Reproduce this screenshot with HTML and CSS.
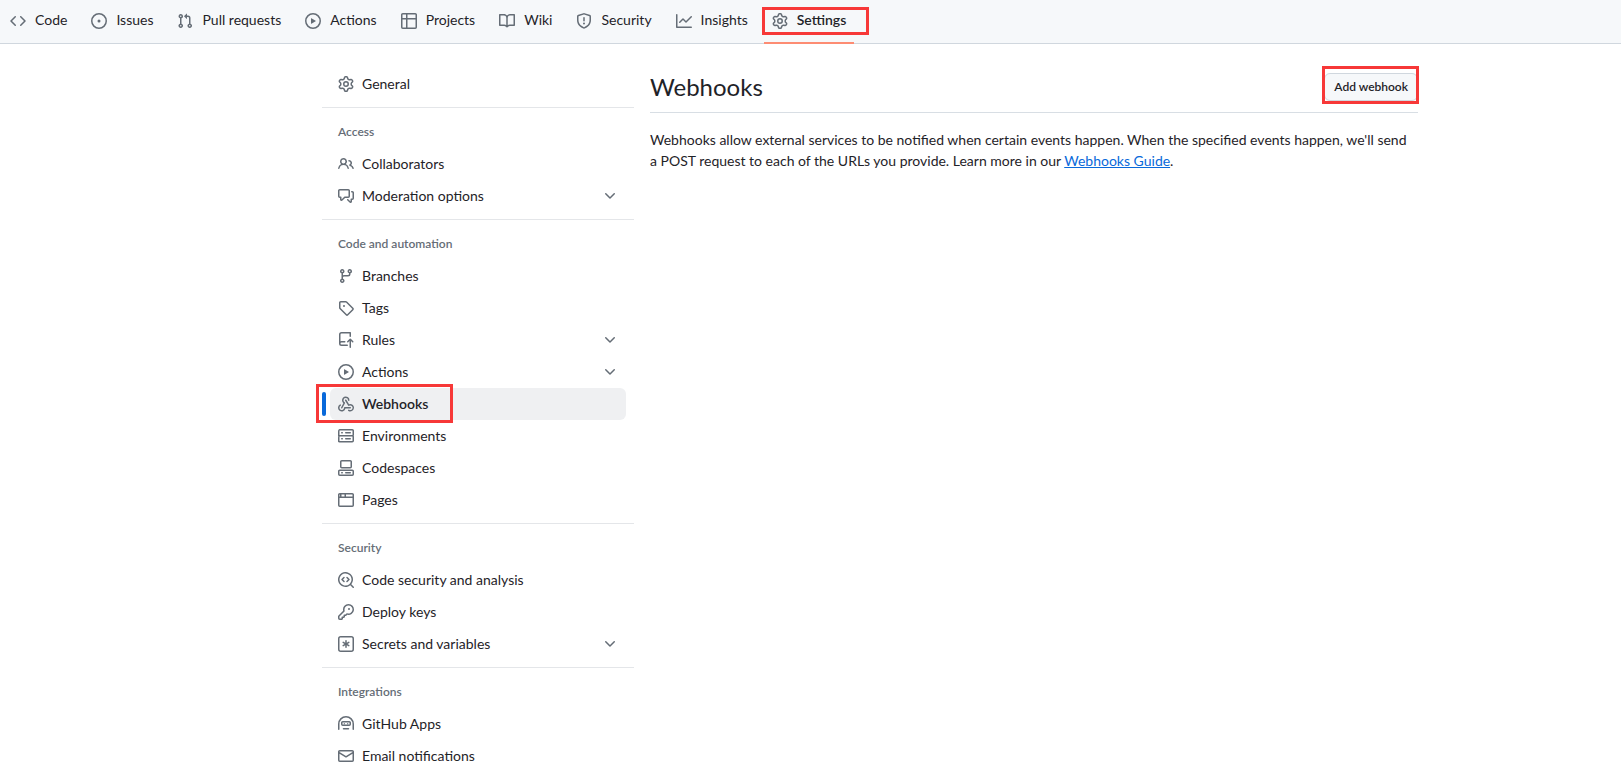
FILE: index.html
```html
<!DOCTYPE html>
<html lang="en">
<head>
  <meta charset="UTF-8">
  <meta name="viewport" content="width=device-width, initial-scale=1.0">
  <title>Webhooks</title>
  <link rel="stylesheet" href="styles.css">
</head>
<body>
  <svg class="sprites" aria-hidden="true">
    <symbol id="i-code" viewBox="0 0 16 16"><path d="m11.28 3.22 4.25 4.25a.75.75 0 0 1 0 1.06l-4.25 4.25a.749.749 0 0 1-1.275-.326.749.749 0 0 1 .215-.734L13.94 8l-3.72-3.72a.749.749 0 0 1 .326-1.275.749.749 0 0 1 .734.215Zm-6.56 0a.751.751 0 0 1 1.042.018.751.751 0 0 1 .018 1.042L2.06 8l3.72 3.72a.749.749 0 0 1-.326 1.275.749.749 0 0 1-.734-.215L.47 8.53a.75.75 0 0 1 0-1.06Z"/></symbol>
    <symbol id="i-issue" viewBox="0 0 16 16"><path d="M8 9.5a1.5 1.5 0 1 0 0-3 1.5 1.5 0 0 0 0 3Z"/><path d="M8 0a8 8 0 1 1 0 16A8 8 0 0 1 8 0ZM1.5 8a6.5 6.5 0 1 0 13 0 6.5 6.5 0 0 0-13 0Z"/></symbol>
    <symbol id="i-pull" viewBox="0 0 16 16"><path d="M1.5 3.25a2.25 2.25 0 1 1 3 2.122v5.256a2.251 2.251 0 1 1-1.5 0V5.372A2.25 2.25 0 0 1 1.5 3.25Zm5.677-.177L9.573.677A.25.25 0 0 1 10 .854V2.5h1A2.5 2.5 0 0 1 13.5 5v5.628a2.251 2.251 0 1 1-1.5 0V5a1 1 0 0 0-1-1h-1v1.646a.25.25 0 0 1-.427.177L7.177 3.427a.25.25 0 0 1 0-.354ZM3.75 2.5a.75.75 0 1 0 0 1.5.75.75 0 0 0 0-1.5Zm0 9.5a.75.75 0 1 0 0 1.5.75.75 0 0 0 0-1.5Zm8.25.75a.75.75 0 1 0 1.5 0 .75.75 0 0 0-1.5 0Z"/></symbol>
    <symbol id="i-play" viewBox="0 0 16 16"><path d="M8 0a8 8 0 1 1 0 16A8 8 0 0 1 8 0ZM1.5 8a6.5 6.5 0 1 0 13 0 6.5 6.5 0 0 0-13 0Zm4.879-2.773 4.264 2.559a.25.25 0 0 1 0 .428l-4.264 2.559A.25.25 0 0 1 6 10.559V5.442a.25.25 0 0 1 .379-.215Z"/></symbol>
    <symbol id="i-table" viewBox="0 0 16 16"><path d="M0 1.75C0 .784.784 0 1.75 0h12.5C15.216 0 16 .784 16 1.75v12.5A1.75 1.75 0 0 1 14.25 16H1.75A1.75 1.75 0 0 1 0 14.25ZM6.5 6.5v8h7.75a.25.25 0 0 0 .25-.25V6.5Zm8-1.5V1.75a.25.25 0 0 0-.25-.25H6.5V5Zm-13 1.5v7.75c0 .138.112.25.25.25H5v-8ZM5 5V1.5H1.75a.25.25 0 0 0-.25.25V5Z"/></symbol>
    <symbol id="i-book" viewBox="0 0 16 16"><path d="M0 1.75A.75.75 0 0 1 .75 1h4.253c1.227 0 2.317.59 3 1.501A3.743 3.743 0 0 1 11.006 1h4.245a.75.75 0 0 1 .75.75v10.5a.75.75 0 0 1-.75.75h-4.507a2.25 2.25 0 0 0-1.591.659l-.622.621a.75.75 0 0 1-1.06 0l-.622-.621A2.25 2.25 0 0 0 5.258 13H.75a.75.75 0 0 1-.75-.75Zm7.251 10.324.004-5.073-.002-2.253A2.25 2.25 0 0 0 5.003 2.5H1.5v9h3.757a3.75 3.75 0 0 1 1.994.574ZM8.755 4.75l-.004 7.322a3.752 3.752 0 0 1 1.992-.572H14.5v-9h-3.495a2.25 2.25 0 0 0-2.25 2.25Z"/></symbol>
    <symbol id="i-shield" viewBox="0 0 16 16"><path d="M7.467.133a1.748 1.748 0 0 1 1.066 0l5.25 1.68A1.75 1.75 0 0 1 15 3.48V7c0 1.566-.32 3.182-1.303 4.682-.983 1.498-2.585 2.813-5.032 3.855a1.697 1.697 0 0 1-1.33 0c-2.447-1.042-4.049-2.357-5.032-3.855C1.32 10.182 1 8.566 1 7V3.48a1.75 1.75 0 0 1 1.217-1.667Zm.61 1.429a.25.25 0 0 0-.153 0l-5.25 1.68a.25.25 0 0 0-.174.238V7c0 1.358.275 2.666 1.057 3.86.784 1.194 2.121 2.34 4.366 3.297a.196.196 0 0 0 .154 0c2.245-.956 3.582-2.104 4.366-3.298C13.225 9.666 13.5 8.36 13.5 7V3.48a.251.251 0 0 0-.174-.237l-5.25-1.68ZM8.75 4.75v3a.75.75 0 0 1-1.5 0v-3a.75.75 0 0 1 1.5 0ZM9 10.5a1 1 0 1 1-2 0 1 1 0 0 1 2 0Z"/></symbol>
    <symbol id="i-graph" viewBox="0 0 16 16"><path d="M1.5 1.75V13.5h13.75a.75.75 0 0 1 0 1.5H.75a.75.75 0 0 1-.75-.75V1.75a.75.75 0 0 1 1.5 0Zm14.28 2.53-5.25 5.25a.75.75 0 0 1-1.06 0L7 7.06 4.28 9.78a.751.751 0 0 1-1.042-.018.751.751 0 0 1-.018-1.042l3.25-3.25a.75.75 0 0 1 1.06 0L10 7.94l4.72-4.72a.751.751 0 0 1 1.042.018.751.751 0 0 1 .018 1.042Z"/></symbol>
    <symbol id="i-gear" viewBox="0 0 16 16"><path d="M8 0a8.2 8.2 0 0 1 .701.031C9.444.095 9.99.645 10.16 1.29l.288 1.107c.018.066.079.158.212.224.231.114.454.243.668.386.123.082.233.09.299.071l1.103-.303c.644-.176 1.392.021 1.82.63.27.385.506.792.704 1.218.315.675.111 1.422-.364 1.891l-.814.806c-.049.048-.098.147-.088.294.016.257.016.515 0 .772-.01.147.038.246.088.294l.814.806c.475.469.679 1.216.364 1.891a7.977 7.977 0 0 1-.704 1.217c-.428.61-1.176.807-1.82.63l-1.102-.302c-.067-.019-.177-.011-.3.071a5.909 5.909 0 0 1-.668.386c-.133.066-.194.158-.211.224l-.29 1.106c-.168.646-.715 1.196-1.458 1.26a8.006 8.006 0 0 1-1.402 0c-.743-.064-1.289-.614-1.458-1.26l-.289-1.106c-.018-.066-.079-.158-.212-.224a5.738 5.738 0 0 1-.668-.386c-.123-.082-.233-.09-.299-.071l-1.103.303c-.644.176-1.392-.021-1.82-.63a8.12 8.12 0 0 1-.704-1.218c-.315-.675-.111-1.422.363-1.891l.815-.806c.05-.048.098-.147.088-.294a6.214 6.214 0 0 1 0-.772c.01-.147-.038-.246-.088-.294l-.815-.806C.635 6.045.431 5.298.746 4.623a7.92 7.92 0 0 1 .704-1.217c.428-.61 1.176-.807 1.82-.63l1.102.302c.067.019.177.011.3-.071.214-.143.437-.272.668-.386.133-.066.194-.158.211-.224l.29-1.106C6.009.645 6.556.095 7.299.03 7.53.01 7.764 0 8 0Zm-.571 1.525c-.036.003-.108.036-.137.146l-.289 1.105c-.147.561-.549.967-.998 1.189-.173.086-.34.183-.5.29-.417.278-.97.423-1.529.27l-1.103-.303c-.109-.03-.175.016-.195.045-.22.312-.412.644-.573.99-.014.031-.021.11.059.19l.815.806c.411.406.562.957.53 1.456a4.709 4.709 0 0 0 0 .582c.032.499-.119 1.05-.53 1.456l-.815.806c-.081.08-.073.159-.059.19.162.346.353.677.573.989.02.03.085.076.195.046l1.102-.303c.56-.153 1.113-.008 1.53.27.161.107.328.204.501.29.447.222.85.629.997 1.189l.289 1.105c.029.109.101.143.137.146a6.6 6.6 0 0 0 1.142 0c.036-.003.108-.036.137-.146l.289-1.105c.147-.561.549-.967.998-1.189.173-.086.34-.183.5-.29.417-.278.97-.423 1.529-.27l1.103.303c.109.029.175-.016.195-.045.22-.313.411-.644.573-.99.014-.031.021-.11-.059-.19l-.815-.806c-.411-.406-.562-.957-.53-1.456a4.709 4.709 0 0 0 0-.582c-.032-.499.119-1.05.53-1.456l.815-.806c.081-.08.073-.159.059-.19a6.464 6.464 0 0 0-.573-.989c-.02-.03-.085-.076-.195-.046l-1.102.303c-.56.153-1.113.008-1.53-.27a4.44 4.44 0 0 0-.501-.29c-.447-.222-.85-.629-.997-1.189l-.289-1.105c-.029-.11-.101-.143-.137-.146a6.6 6.6 0 0 0-1.142 0ZM11 8a3 3 0 1 1-6 0 3 3 0 0 1 6 0ZM9.5 8a1.5 1.5 0 1 0-3.001.001A1.5 1.5 0 0 0 9.5 8Z"/></symbol>
    <symbol id="i-people" viewBox="0 0 16 16"><path d="M2 5.5a3.5 3.5 0 1 1 5.898 2.549 5.508 5.508 0 0 1 3.034 4.084.75.75 0 1 1-1.482.235 4 4 0 0 0-7.9 0 .75.75 0 0 1-1.482-.236A5.507 5.507 0 0 1 3.102 8.05 3.493 3.493 0 0 1 2 5.5ZM11 4a3.001 3.001 0 0 1 2.22 5.018 5.01 5.01 0 0 1 2.56 3.012.749.749 0 0 1-.885.954.752.752 0 0 1-.549-.514 3.507 3.507 0 0 0-2.522-2.372.75.75 0 0 1-.574-.73v-.352a.75.75 0 0 1 .416-.672A1.5 1.5 0 0 0 11 5.5.75.75 0 0 1 11 4Zm-5.5-.5a2 2 0 1 0-.001 3.999A2 2 0 0 0 5.5 3.5Z"/></symbol>
    <symbol id="i-discussion" viewBox="0 0 16 16"><path d="M1.75 1h8.5c.966 0 1.75.784 1.75 1.75v5.5A1.75 1.75 0 0 1 10.25 10H7.061l-2.574 2.573A1.458 1.458 0 0 1 2 11.543V10h-.25A1.75 1.75 0 0 1 0 8.25v-5.5C0 1.784.784 1 1.75 1ZM1.5 2.75v5.5c0 .138.112.25.25.25h1a.75.75 0 0 1 .75.75v2.19l2.72-2.72a.749.749 0 0 1 .53-.22h3.5a.25.25 0 0 0 .25-.25v-5.5a.25.25 0 0 0-.25-.25h-8.5a.25.25 0 0 0-.25.25Zm13 2a.25.25 0 0 0-.25-.25h-.5a.75.75 0 0 1 0-1.5h.5c.966 0 1.75.784 1.75 1.75v5.5A1.75 1.75 0 0 1 14.25 12H14v1.543a1.458 1.458 0 0 1-2.487 1.03L9.22 12.28a.749.749 0 0 1 .326-1.275.749.749 0 0 1 .734.215l2.22 2.22v-2.19a.75.75 0 0 1 .75-.75h1a.25.25 0 0 0 .25-.25Z"/></symbol>
    <symbol id="i-branch" viewBox="0 0 16 16"><path d="M9.5 3.25a2.25 2.25 0 1 1 3 2.122V6A2.5 2.5 0 0 1 10 8.5H6a1 1 0 0 0-1 1v1.128a2.251 2.251 0 1 1-1.5 0V5.372a2.25 2.25 0 1 1 1.5 0v1.836A2.493 2.493 0 0 1 6 7h4a1 1 0 0 0 1-1v-.628A2.25 2.25 0 0 1 9.5 3.25Zm-6 0a.75.75 0 1 0 1.5 0 .75.75 0 0 0-1.5 0Zm8.25-.75a.75.75 0 1 0 0 1.5.75.75 0 0 0 0-1.5ZM4.25 12a.75.75 0 1 0 0 1.5.75.75 0 0 0 0-1.5Z"/></symbol>
    <symbol id="i-tag" viewBox="0 0 16 16"><path d="M1 7.775V2.75C1 1.784 1.784 1 2.75 1h5.025c.464 0 .91.184 1.238.513l6.25 6.25a1.75 1.75 0 0 1 0 2.474l-5.026 5.026a1.75 1.75 0 0 1-2.474 0l-6.25-6.25A1.75 1.75 0 0 1 1 7.775Zm1.5 0c0 .066.026.13.073.177l6.25 6.25a.25.25 0 0 0 .354 0l5.025-5.025a.25.25 0 0 0 0-.354l-6.25-6.25a.25.25 0 0 0-.177-.073H2.75a.25.25 0 0 0-.25.25ZM6 5a1 1 0 1 1 0 2 1 1 0 0 1 0-2Z"/></symbol>
    <symbol id="i-rules" viewBox="0 0 16 16"><path d="M1 2.5A2.5 2.5 0 0 1 3.5 0h8.75a.75.75 0 0 1 .75.75v3.5a.75.75 0 0 1-1.5 0V1.5h-8a1 1 0 0 0-1 1v6.708A2.492 2.492 0 0 1 3.5 9h3.25a.75.75 0 0 1 0 1.5H3.5a1 1 0 0 0 0 2h5.75a.75.75 0 0 1 0 1.5H3.5A2.5 2.5 0 0 1 1 11.5Zm13.23 7.79h-.001l-1.224-1.224v6.184a.75.75 0 0 1-1.5 0V9.066L10.28 10.29a.75.75 0 0 1-1.06-1.061l2.505-2.504a.75.75 0 0 1 1.06 0L15.29 9.23a.751.751 0 0 1-.018 1.042.751.751 0 0 1-1.042.018Z"/></symbol>
    <symbol id="i-webhook" viewBox="0 0 16 16"><path d="M5.5 4.25a2.25 2.25 0 0 1 4.5 0 .75.75 0 0 0 1.5 0 3.75 3.75 0 1 0-6.14 2.889l-2.272 4.258a.75.75 0 0 0 1.324.706L7 7.25a.75.75 0 0 0-.309-1.015A2.25 2.25 0 0 1 5.5 4.25Z"/><path d="M7.364 3.607a.75.75 0 0 1 1.03.257l2.608 4.349a3.75 3.75 0 1 1-.628 6.785.75.75 0 0 1 .752-1.299 2.25 2.25 0 1 0-.033-3.88.75.75 0 0 1-1.03-.256L7.107 4.636a.75.75 0 0 1 .257-1.03Z"/><path d="M2.9 8.776A.75.75 0 0 1 2.625 9.8 2.25 2.25 0 1 0 6 11.75a.75.75 0 0 1 .75-.751h5.5a.75.75 0 0 1 0 1.5H7.425a3.751 3.751 0 1 1-5.55-3.998.75.75 0 0 1 1.024.274Z"/></symbol>
    <symbol id="i-server" viewBox="0 0 16 16"><path d="M1.75 1h12.5c.966 0 1.75.784 1.75 1.75v4c0 .372-.116.717-.314 1 .198.283.314.628.314 1v4a1.75 1.75 0 0 1-1.75 1.75H1.75A1.75 1.75 0 0 1 0 13.75v-4c0-.372.116-.717.314-1a1.739 1.739 0 0 1-.314-1v-4C0 1.784.784 1 1.75 1ZM1.5 2.75v4c0 .138.112.25.25.25h12.5a.25.25 0 0 0 .25-.25v-4a.25.25 0 0 0-.25-.25H1.75a.25.25 0 0 0-.25.25Zm.25 5.75a.25.25 0 0 0-.25.25v4c0 .138.112.25.25.25h12.5a.25.25 0 0 0 .25-.25v-4a.25.25 0 0 0-.25-.25ZM7 4.75A.75.75 0 0 1 7.75 4h4.5a.75.75 0 0 1 0 1.5h-4.5A.75.75 0 0 1 7 4.75ZM7.75 10h4.5a.75.75 0 0 1 0 1.5h-4.5a.75.75 0 0 1 0-1.5ZM3 4.75A.75.75 0 0 1 3.75 4h.5a.75.75 0 0 1 0 1.5h-.5A.75.75 0 0 1 3 4.75ZM3.75 10h.5a.75.75 0 0 1 0 1.5h-.5a.75.75 0 0 1 0-1.5Z"/></symbol>
    <symbol id="i-codespaces" viewBox="0 0 16 16"><path d="M0 11.25c0-.966.784-1.75 1.75-1.75h12.5c.966 0 1.75.784 1.75 1.75v3A1.75 1.75 0 0 1 14.25 16H1.75A1.75 1.75 0 0 1 0 14.25Zm2-9.5C2 .784 2.784 0 3.75 0h8.5C13.216 0 14 .784 14 1.75v5a1.75 1.75 0 0 1-1.75 1.75h-8.5A1.75 1.75 0 0 1 2 6.75Zm1.75-.25a.25.25 0 0 0-.25.25v5c0 .138.112.25.25.25h8.5a.25.25 0 0 0 .25-.25v-5a.25.25 0 0 0-.25-.25Zm-2 9.5a.25.25 0 0 0-.25.25v3c0 .138.112.25.25.25h12.5a.25.25 0 0 0 .25-.25v-3a.25.25 0 0 0-.25-.25Z"/><path d="M7 12.75a.75.75 0 0 1 .75-.75h4.5a.75.75 0 0 1 0 1.5h-4.5a.75.75 0 0 1-.75-.75Zm-4 0a.75.75 0 0 1 .75-.75h.5a.75.75 0 0 1 0 1.5h-.5a.75.75 0 0 1-.75-.75Z"/></symbol>
    <symbol id="i-browser" viewBox="0 0 16 16"><path fill-rule="evenodd" d="M0 2.75C0 1.784.784 1 1.75 1h12.5c.966 0 1.75.784 1.75 1.75v10.5A1.75 1.75 0 0 1 14.25 15H1.75A1.75 1.75 0 0 1 0 13.25ZM14.5 6h-13v7.25c0 .138.112.25.25.25h12.5a.25.25 0 0 0 .25-.25Zm0-1.5V2.75a.25.25 0 0 0-.25-.25H8v2Zm-8 0v-2h-3v2ZM2 4.5v-2h-.25a.25.25 0 0 0-.25.25V4.5Z"/></symbol>
    <symbol id="i-codescan" viewBox="0 0 16 16"><path d="M8.47 4.97a.75.75 0 0 0 0 1.06L9.94 7.5 8.47 8.97a.75.75 0 1 0 1.06 1.06l2-2a.75.75 0 0 0 0-1.06l-2-2a.75.75 0 0 0-1.06 0ZM6.53 6.03a.75.75 0 0 0-1.06-1.06l-2 2a.75.75 0 0 0 0 1.06l2 2a.75.75 0 1 0 1.06-1.06L5.06 7.5l1.47-1.47Z"/><path d="M12.246 13.307a7.501 7.501 0 1 1 1.06-1.06l2.474 2.473a.749.749 0 0 1-.326 1.275.749.749 0 0 1-.734-.215ZM1.5 7.5a6.002 6.002 0 0 0 3.608 5.504 6.002 6.002 0 0 0 6.486-1.117.748.748 0 0 1 .292-.293A6 6 0 1 0 1.5 7.5Z"/></symbol>
    <symbol id="i-key" viewBox="0 0 16 16"><path d="M10.5 0a5.499 5.499 0 1 1-1.288 10.848l-.932.932a.749.749 0 0 1-.53.22H7v.75a.749.749 0 0 1-.22.53l-.5.5a.749.749 0 0 1-.53.22H5v.75a.749.749 0 0 1-.22.53l-.5.5a.749.749 0 0 1-.53.22h-2A1.75 1.75 0 0 1 0 14.25v-2c0-.199.079-.389.22-.53l4.932-4.932A5.5 5.5 0 0 1 10.5 0Zm-4 5.5c-.001.431.069.86.205 1.269a.75.75 0 0 1-.181.768L1.5 12.56v1.69c0 .138.112.25.25.25h1.69l.06-.06v-1.19a.75.75 0 0 1 .75-.75h1.19l.06-.06v-1.19a.75.75 0 0 1 .75-.75h1.19l1.023-1.025a.75.75 0 0 1 .768-.18A4 4 0 1 0 6.5 5.5ZM11 6a1 1 0 1 1 0-2 1 1 0 0 1 0 2Z"/></symbol>
    <symbol id="i-asterisk" viewBox="0 0 16 16"><path fill-rule="evenodd" d="M0 2.75A2.75 2.75 0 0 1 2.75 0h10.5A2.75 2.75 0 0 1 16 2.75v10.5A2.75 2.75 0 0 1 13.25 16H2.75A2.75 2.75 0 0 1 0 13.25ZM2.75 1.5c-.69 0-1.25.56-1.25 1.25v10.5c0 .69.56 1.25 1.25 1.25h10.5c.69 0 1.25-.56 1.25-1.25V2.75c0-.69-.56-1.25-1.25-1.25Z"/><path d="M8 4a.75.75 0 0 1 .75.75V6.7l1.69-.975a.75.75 0 0 1 .75 1.3L9.5 8l1.69.976a.75.75 0 0 1-.75 1.298L8.75 9.3v1.951a.75.75 0 0 1-1.5 0V9.299l-1.69.976a.75.75 0 0 1-.75-1.3L6.5 8l-1.69-.975a.75.75 0 0 1 .75-1.3l1.69.976V4.75A.75.75 0 0 1 8 4Z"/></symbol>
    <symbol id="i-hubot" viewBox="0 0 16 16"><path fill-rule="evenodd" d="M0 8a8 8 0 0 1 16 0v5.25a.75.75 0 0 1-1.5 0V8a6.5 6.5 0 1 0-13 0v5.25a.75.75 0 0 1-1.5 0Zm3-1.25C3 5.784 3.784 5 4.75 5h6.5c.966 0 1.75.784 1.75 1.75v1.5A1.75 1.75 0 0 1 11.25 10h-6.5A1.75 1.75 0 0 1 3 8.25Zm1.75-.25a.25.25 0 0 0-.25.25v1.5c0 .138.112.25.25.25h6.5a.25.25 0 0 0 .25-.25v-1.5a.25.25 0 0 0-.25-.25ZM5.5 12h5a.75.75 0 0 1 0 1.5h-5a.75.75 0 0 1 0-1.5Z"/><path d="M6.25 7h.5v1.5h-1V7.5a.5.5 0 0 1 .5-.5Zm3 0h.5a.5.5 0 0 1 .5.5v1h-1Z"/></symbol>
    <symbol id="i-mail" viewBox="0 0 16 16"><path d="M1.75 2h12.5c.966 0 1.75.784 1.75 1.75v8.5A1.75 1.75 0 0 1 14.25 14H1.75A1.75 1.75 0 0 1 0 12.25v-8.5C0 2.784.784 2 1.75 2ZM1.5 12.251c0 .138.112.25.25.25h12.5a.25.25 0 0 0 .25-.25V5.809L8.38 9.397a.75.75 0 0 1-.76 0L1.5 5.809v6.442Zm13-8.181v-.32a.25.25 0 0 0-.25-.25H1.75a.25.25 0 0 0-.25.25v.32L8 7.88Z"/></symbol>
    <symbol id="i-chevron" viewBox="0 0 16 16"><path d="M12.78 5.22a.749.749 0 0 1 0 1.06l-4.25 4.25a.749.749 0 0 1-1.06 0L3.22 6.28a.749.749 0 1 1 1.06-1.06L8 8.939l3.72-3.719a.749.749 0 0 1 1.06 0Z"/></symbol>
  </svg>

  <nav class="repo-nav">
    <a class="tab"><svg class="icon"><use href="#i-code"/></svg>Code</a>
    <a class="tab"><svg class="icon"><use href="#i-issue"/></svg>Issues</a>
    <a class="tab"><svg class="icon"><use href="#i-pull"/></svg>Pull requests</a>
    <a class="tab"><svg class="icon"><use href="#i-play"/></svg>Actions</a>
    <a class="tab"><svg class="icon"><use href="#i-table"/></svg>Projects</a>
    <a class="tab"><svg class="icon"><use href="#i-book"/></svg>Wiki</a>
    <a class="tab"><svg class="icon"><use href="#i-shield"/></svg>Security</a>
    <a class="tab"><svg class="icon"><use href="#i-graph"/></svg>Insights</a>
    <a class="tab selected"><svg class="icon"><use href="#i-gear"/></svg>Settings<span class="mark mark-tab"></span></a>
  </nav>

  <div class="layout">
    <aside class="sidebar">
      <a class="side-item"><svg class="icon"><use href="#i-gear"/></svg>General</a>
      <hr class="side-rule">
      <h3 class="side-head">Access</h3>
      <a class="side-item"><svg class="icon"><use href="#i-people"/></svg>Collaborators</a>
      <a class="side-item"><svg class="icon"><use href="#i-discussion"/></svg>Moderation options<svg class="icon chevron"><use href="#i-chevron"/></svg></a>
      <hr class="side-rule">
      <h3 class="side-head">Code and automation</h3>
      <a class="side-item"><svg class="icon"><use href="#i-branch"/></svg>Branches</a>
      <a class="side-item"><svg class="icon"><use href="#i-tag"/></svg>Tags</a>
      <a class="side-item"><svg class="icon"><use href="#i-rules"/></svg>Rules<svg class="icon chevron"><use href="#i-chevron"/></svg></a>
      <a class="side-item"><svg class="icon"><use href="#i-play"/></svg>Actions<svg class="icon chevron"><use href="#i-chevron"/></svg></a>
      <a class="side-item current"><svg class="icon"><use href="#i-webhook"/></svg>Webhooks<span class="mark mark-side"></span></a>
      <a class="side-item"><svg class="icon"><use href="#i-server"/></svg>Environments</a>
      <a class="side-item"><svg class="icon"><use href="#i-codespaces"/></svg>Codespaces</a>
      <a class="side-item"><svg class="icon"><use href="#i-browser"/></svg>Pages</a>
      <hr class="side-rule">
      <h3 class="side-head">Security</h3>
      <a class="side-item"><svg class="icon"><use href="#i-codescan"/></svg>Code security and analysis</a>
      <a class="side-item"><svg class="icon"><use href="#i-key"/></svg>Deploy keys</a>
      <a class="side-item"><svg class="icon"><use href="#i-asterisk"/></svg>Secrets and variables<svg class="icon chevron"><use href="#i-chevron"/></svg></a>
      <hr class="side-rule">
      <h3 class="side-head">Integrations</h3>
      <a class="side-item"><svg class="icon"><use href="#i-hubot"/></svg>GitHub Apps</a>
      <a class="side-item"><svg class="icon"><use href="#i-mail"/></svg>Email notifications</a>
    </aside>

    <main class="content">
      <div class="content-head">
        <h1>Webhooks</h1>
        <a class="btn">Add webhook<span class="mark mark-btn"></span></a>
      </div>
      <p class="intro">Webhooks allow external services to be notified when certain events happen. When the specified events happen, we'll send a POST request to each of the URLs you provide. Learn more in our <a href="#">Webhooks Guide</a>.</p>
    </main>
  </div>
</body>
</html>
```

FILE: styles.css
```css
html, body { height: 768px; overflow: hidden; }
body { margin: 0; font-family: Lato, "Noto Sans", sans-serif; font-size: 14px; color: #1f2328; background: #fff; }
a { color: inherit; text-decoration: none; }
.sprites { display: none; }
.icon { width: 16px; height: 16px; fill: #656d76; flex: none; margin-top: 2px; }

/* top tabs */
.repo-nav { display: flex; gap: 8px; height: 44px; box-sizing: border-box; padding-left: 2px; background: #f6f8fa; border-bottom: 1px solid #d0d7de; }
.tab { position: relative; display: flex; align-items: center; gap: 9px; height: 44px; box-sizing: border-box; padding: 0 8px 3px; border-bottom: 2px solid transparent; }
.tab.selected { font-weight: 600; border-bottom-color: #fd8c73; }

/* red annotation boxes from the original screenshot */
.mark { position: absolute; box-sizing: border-box; border: 3px solid #f73838; pointer-events: none; }
.mark-tab { left: -2px; top: 7px; width: 107px; height: 28px; }
.mark-side { left: -14px; top: -4px; width: 137px; height: 39px; }
.mark-btn { left: -3px; right: -2px; top: -8px; bottom: -4px; }

/* sidebar */
.layout { display: flex; gap: 16px; padding: 24px 0 0 322px; }
.sidebar { width: 312px; flex: none; }
.side-item { position: relative; display: flex; align-items: center; gap: 8px; height: 32px; box-sizing: border-box; margin: 0 8px; padding: 0 8px 2px; border-radius: 6px; }
.chevron { margin-left: auto; }
.side-item.current { font-weight: 600; background: #eff0f2; }
.side-item.current::before { content: ""; position: absolute; left: -8px; top: 4px; width: 4px; height: 24px; border-radius: 6px; background: #0969da; }
.side-rule { height: 1px; margin: 7px 0 8px; border: 0; background: #e4e6e9; }
.side-head { margin: 0; padding: 0 16px; height: 32px; line-height: 32px; font-size: 12px; font-weight: 600; color: #656d76; }

/* main column */
.content { width: 768px; }
.content-head { display: flex; justify-content: space-between; align-items: center; height: 44px; border-bottom: 1px solid #d8dee4; }
.content-head h1 { margin: 0 0 7px; font-size: 24px; font-weight: 400; }
.btn { position: relative; display: block; height: 28px; box-sizing: border-box; margin-bottom: 7px; padding: 0 9px; line-height: 25px; font-size: 12px; font-weight: 600; background: #f6f8fa; border: 1px solid #d0d7de; border-radius: 6px; }
.intro { margin: 16px 8px 0 0; line-height: 21px; }
.intro a { color: #0969da; text-decoration: underline; }
```
